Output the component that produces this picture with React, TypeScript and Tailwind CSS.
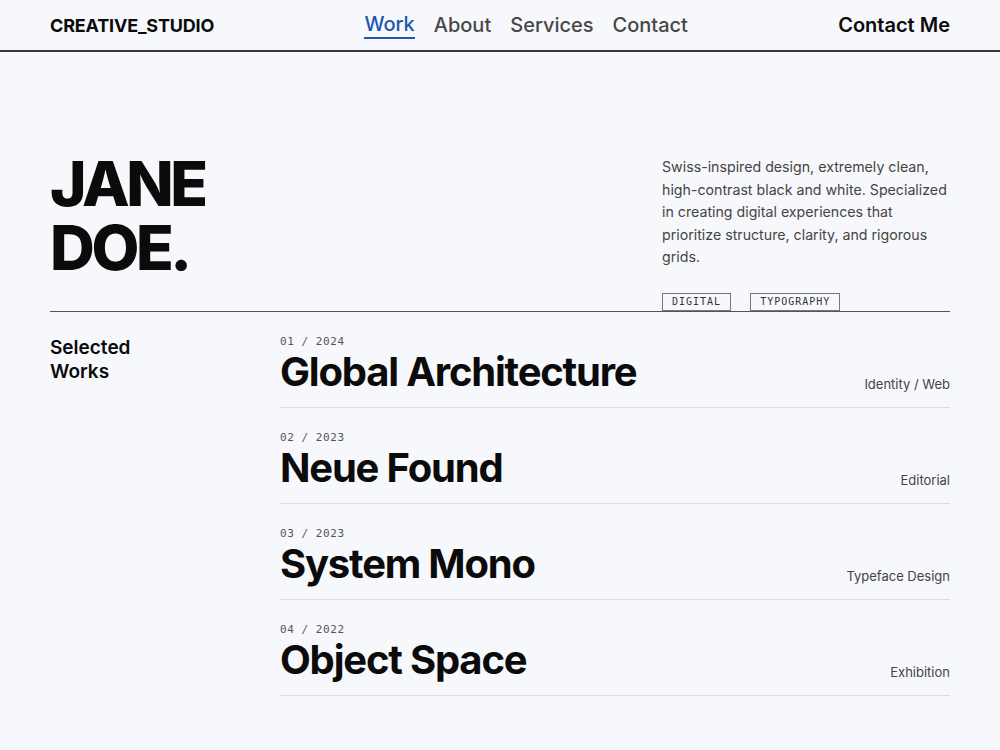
const works = [
  { no: "01 / 2024", title: "Global Architecture", tag: "Identity / Web" },
  { no: "02 / 2023", title: "Neue Found", tag: "Editorial" },
  { no: "03 / 2023", title: "System Mono", tag: "Typeface Design" },
  { no: "04 / 2022", title: "Object Space", tag: "Exhibition" },
];

const head = "font-['Inter','Liberation_Sans',sans-serif]";
const mono = "font-['DejaVu_Sans_Mono','Liberation_Mono',monospace]";

export default function App() {
  return (
    <main className={`min-h-screen bg-[#f7f8fc] text-[#0b0b0b] ${head}`}>
      <header className="border-b-2 border-[#3a3a3a]">
        <div className="mx-[50px] h-[50px] flex items-center justify-between">
          <span className="text-[18px] font-bold tracking-[-0.01em]">CREATIVE_STUDIO</span>
          <nav className="flex items-center gap-[19px] text-[20px] font-medium text-[#474747]">
            <a className="text-[#1d57b0] border-b-2 border-[#1d57b0] leading-[26px]">Work</a>
            <a className="leading-[28px]">About</a>
            <a className="leading-[28px]">Services</a>
            <a className="leading-[28px]">Contact</a>
          </nav>
          <a className="text-[20px] font-semibold">Contact Me</a>
        </div>
      </header>

      <div className="mx-[50px]">
        <section className="pt-[100px] flex justify-between border-b border-[#555]">
          <h1 className="text-[62px] font-extrabold tracking-[-0.055em] pb-[30px]">
            <span className="block leading-[64px]">JANE</span>
            <span className="block leading-[64px]">DOE.</span>
          </h1>
          <div className="w-[288px] pt-[4px]">
            <p className="text-[14.2px] leading-[22.5px] text-[#444]">
              Swiss-inspired design, extremely clean, high-contrast black and white. Specialized in creating digital experiences that prioritize structure, clarity, and rigorous grids.
            </p>
            <div className={`mt-[24px] flex gap-[19px] text-[10px] tracking-[0.1em] text-[#333] ${mono}`}>
              <span className="border border-[#777] px-[9px] leading-[16px]">DIGITAL</span>
              <span className="border border-[#777] px-[9px] leading-[16px]">TYPOGRAPHY</span>
            </div>
          </div>
        </section>

        <section className="grid grid-cols-[230px_1fr]">
          <h2 className="pt-[24px] text-[19px] font-semibold leading-[24px]">
            Selected
            <br />
            Works
          </h2>
          <ul>
            {works.map((w) => (
              <li key={w.no} className="flex items-end justify-between border-b border-[#dcdde2] pt-[22px] pb-[13px]">
                <div>
                  <p className={`text-[11px] leading-[16px] text-[#555] tracking-[0.05em] ${mono}`}>{w.no}</p>
                  <h3 className="text-[40px] font-bold leading-[44px] tracking-[-0.03em]">{w.title}</h3>
                </div>
                <span className="text-[13px] text-[#444] leading-[20px]">{w.tag}</span>
              </li>
            ))}
          </ul>
        </section>
      </div>
    </main>
  );
}
